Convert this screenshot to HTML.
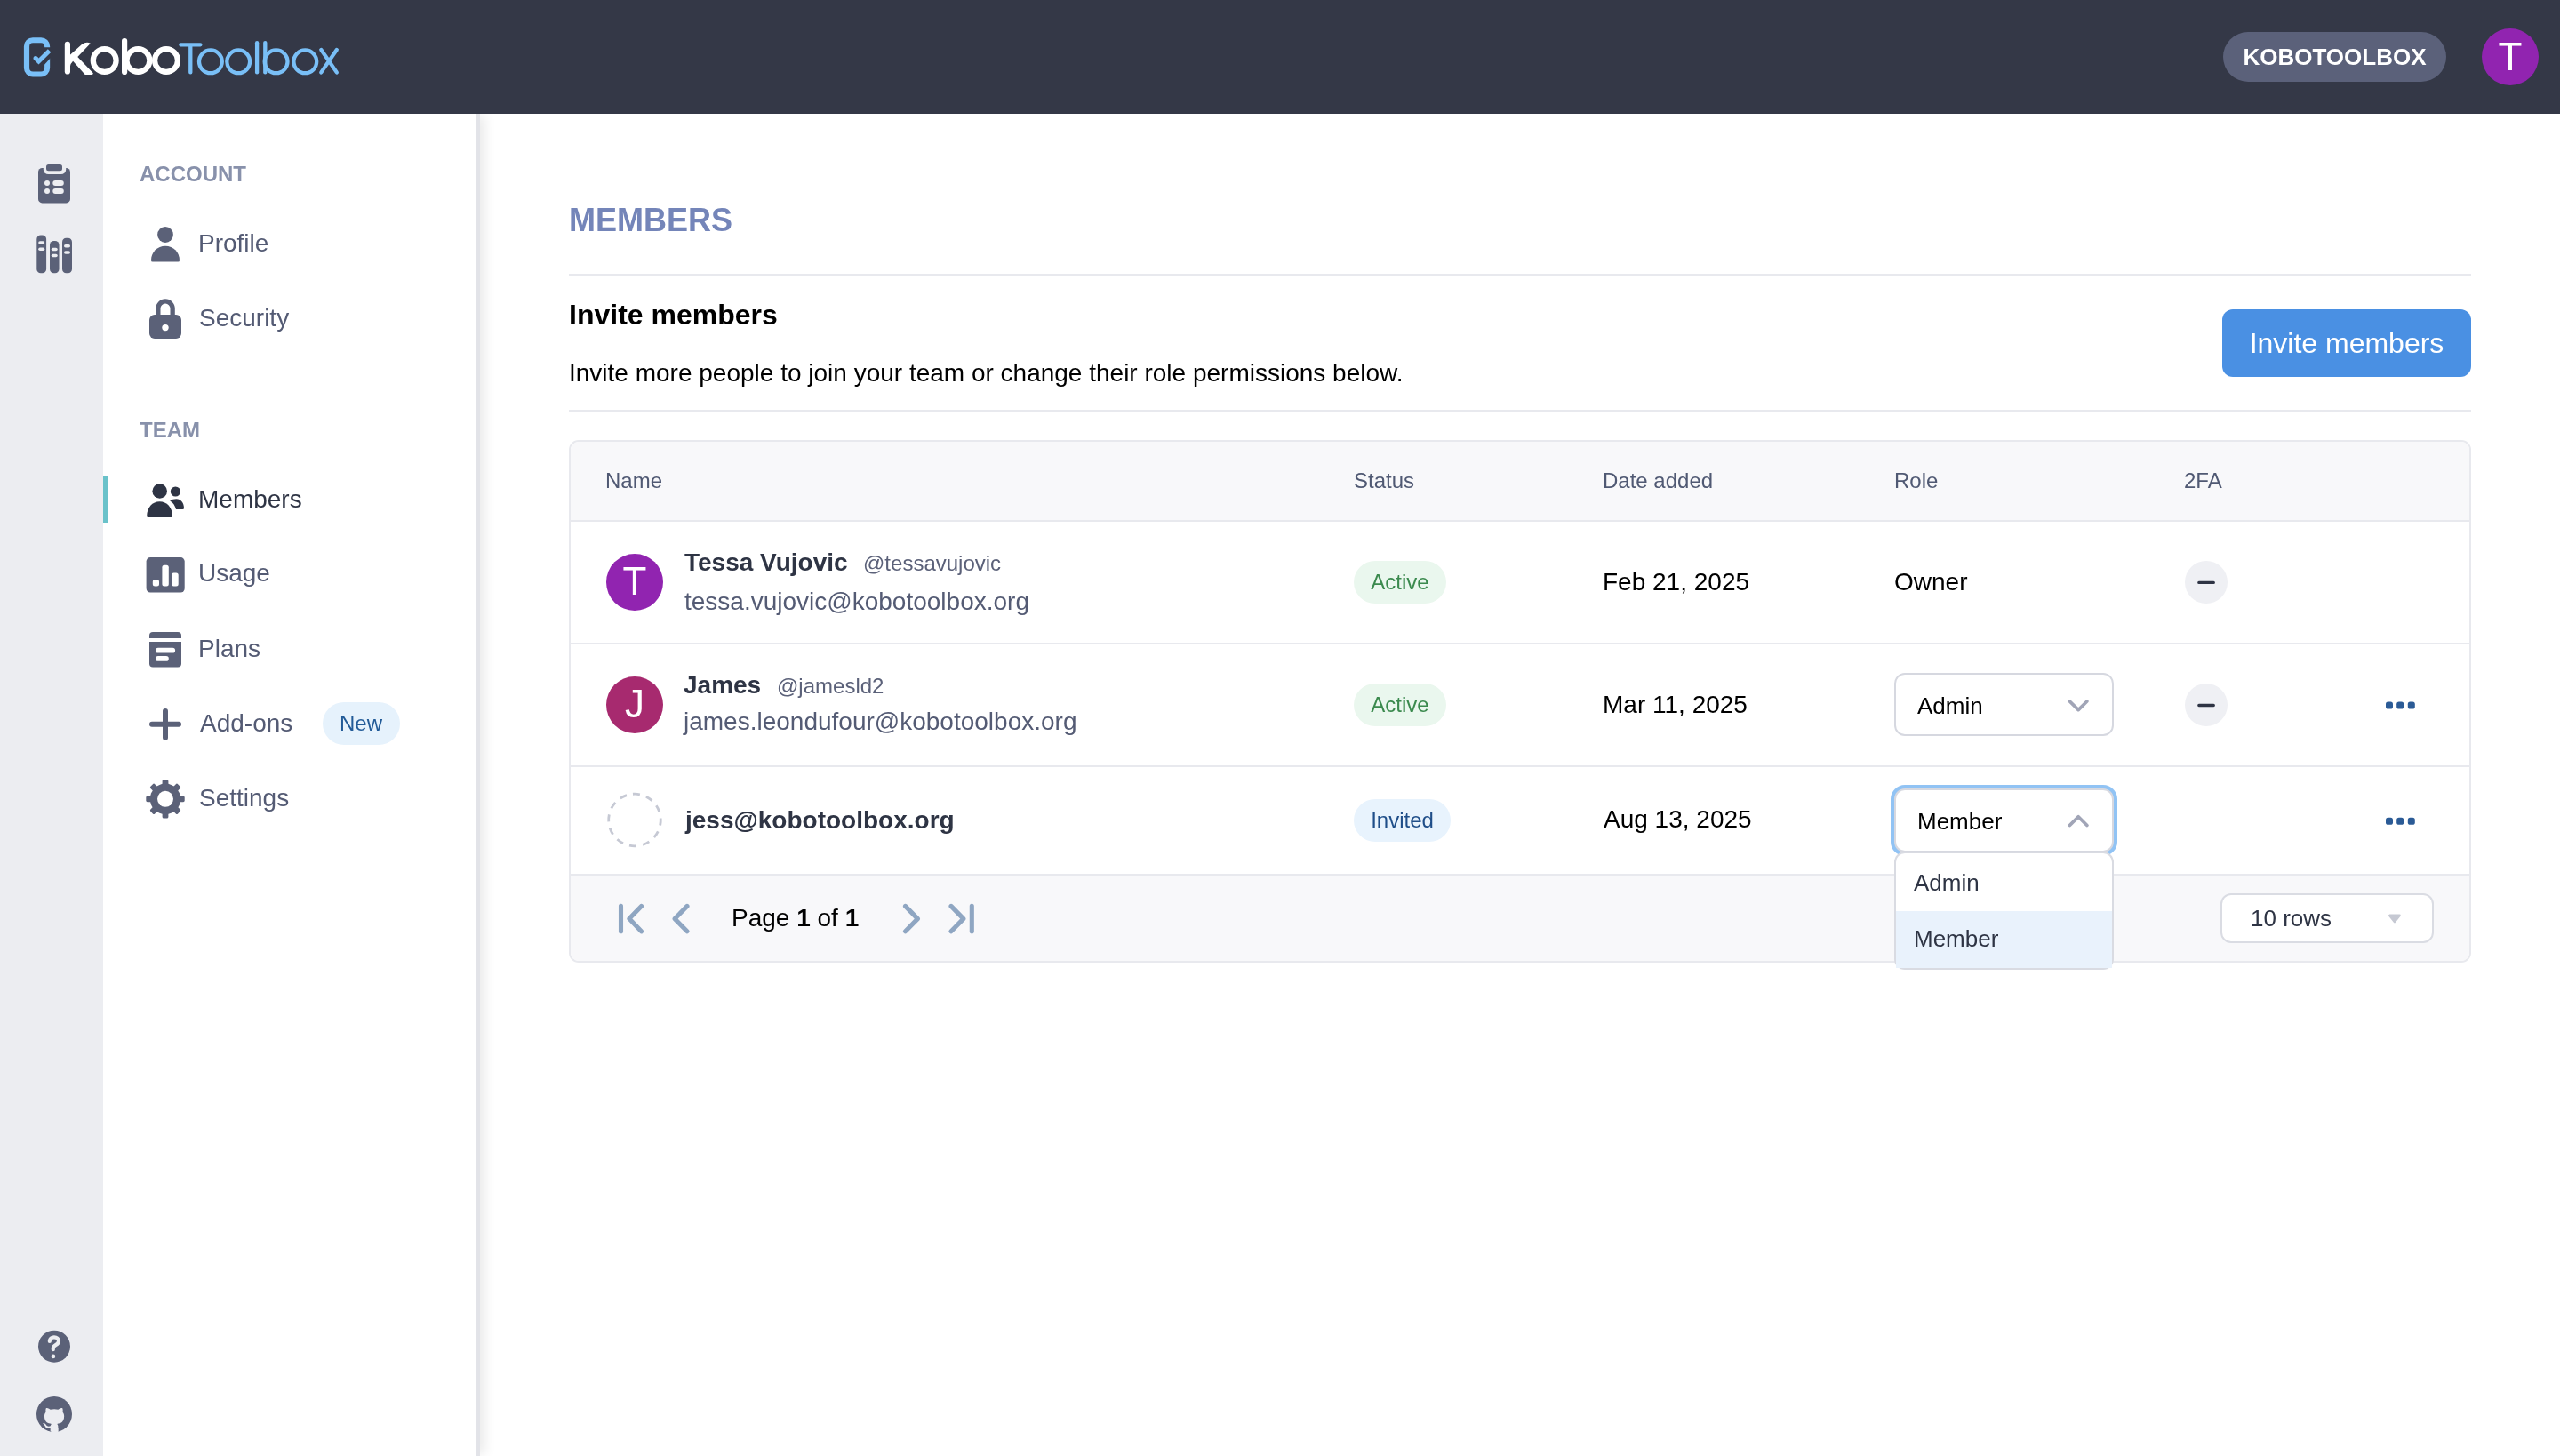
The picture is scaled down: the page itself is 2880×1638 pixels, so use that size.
<!DOCTYPE html>
<html><head><meta charset="utf-8">
<style>
html,body{margin:0;padding:0;width:2880px;height:1638px;overflow:hidden;background:#fff;}
body{position:relative;font-family:"Liberation Sans",sans-serif;}
.a{position:absolute;}
.t{position:absolute;white-space:nowrap;line-height:1;will-change:transform;}
#hdr{left:0;top:0;width:2880px;height:128px;background:#343847;}
#isb{left:0;top:128px;width:116px;height:1510px;background:#ecedf1;}
#nsb{left:116px;top:128px;width:420px;height:1510px;background:#fff;border-right:4px solid #e2e3e8;box-shadow:8px 0 12px -2px rgba(0,0,0,0.08);}
.lbl{font-size:24px;font-weight:700;color:#8891ab;}
.nav{font-size:28px;color:#545b74;}
</style></head><body>
<div id="isb" class="a"></div>
<div id="nsb" class="a"></div>
<div id="hdr" class="a"></div>

<!-- header items -->
<div class="a" style="left:2501px;top:36px;width:251px;height:56px;border-radius:28px;background:#5b617a;"></div>
<div class="t" style="left:2501px;top:51px;width:251px;text-align:center;font-size:26px;font-weight:700;color:#fff;">KOBOTOOLBOX</div>
<div class="a" style="left:2792px;top:32px;width:64px;height:64px;border-radius:50%;background:#9124b0;"></div>
<div class="t" style="left:2792px;top:42px;width:64px;text-align:center;font-size:44px;color:#fff;">T</div>

<!-- sidebar text -->
<div class="t lbl" style="left:157px;top:184px;">ACCOUNT</div>
<div class="t nav" style="left:223px;top:260px;">Profile</div>
<div class="t nav" style="left:224px;top:344px;">Security</div>
<div class="t lbl" style="left:157px;top:472px;">TEAM</div>
<div class="a" style="left:116px;top:536px;width:6px;height:52px;background:#6ac2ca;"></div>
<div class="t nav" style="left:223px;top:548px;color:#2e3444;">Members</div>
<div class="t nav" style="left:223px;top:631px;">Usage</div>
<div class="t nav" style="left:223px;top:716px;">Plans</div>
<div class="t nav" style="left:224.5px;top:800px;">Add-ons</div>
<div class="a" style="left:363px;top:790px;width:87px;height:48px;border-radius:24px;background:#e6f2fc;"></div>
<div class="t" style="left:363px;top:802px;width:86px;text-align:center;font-size:24px;color:#225b98;">New</div>
<div class="t nav" style="left:224px;top:884px;">Settings</div>

<!-- main -->
<div class="t" style="left:640px;top:230px;font-size:36px;font-weight:700;color:#7485b9;">MEMBERS</div>
<div class="a" style="left:640px;top:308px;width:2140px;height:2px;background:#e8e9ee;"></div>
<div class="t" style="left:640px;top:338px;font-size:32px;font-weight:700;color:#000;">Invite members</div>
<div class="t" style="left:640px;top:406px;font-size:28px;color:#000;">Invite more people to join your team or change their role permissions below.</div>
<div class="a" style="left:2500px;top:348px;width:280px;height:76px;border-radius:12px;background:#4a90e3;"></div>
<div class="t" style="left:2500px;top:370px;width:280px;text-align:center;font-size:32px;color:#fff;">Invite members</div>
<div class="a" style="left:640px;top:461px;width:2140px;height:2px;background:#e8e9ee;"></div>

<!-- table -->
<div class="a" style="left:640px;top:495px;width:2136px;height:584px;border:2px solid #e8e9ee;border-radius:11px;background:#fff;overflow:hidden;">
  <div class="a" style="left:0;top:0;width:2136px;height:88px;background:#f8f8fa;"></div>
  <div class="a" style="left:0;top:88px;width:2136px;height:2px;background:#e8e9ee;"></div>
  <div class="a" style="left:0;top:226px;width:2136px;height:2px;background:#e8e9ee;"></div>
  <div class="a" style="left:0;top:364px;width:2136px;height:2px;background:#e8e9ee;"></div>
  <div class="a" style="left:0;top:486px;width:2136px;height:2px;background:#e8e9ee;"></div>
  <div class="a" style="left:0;top:488px;width:2136px;height:96px;background:#f8f8fa;"></div>
</div>
<div class="t" style="left:681px;top:529px;font-size:24px;color:#505973;">Name</div>
<div class="t" style="left:1523px;top:529px;font-size:24px;color:#505973;">Status</div>
<div class="t" style="left:1803px;top:529px;font-size:24px;color:#505973;">Date added</div>
<div class="t" style="left:2131px;top:529px;font-size:24px;color:#505973;">Role</div>
<div class="t" style="left:2457px;top:529px;font-size:24px;color:#505973;">2FA</div>

<!-- row 1 -->
<div class="a" style="left:682px;top:623px;width:64px;height:64px;border-radius:50%;background:#9124b0;"></div>
<div class="t" style="left:682px;top:632px;width:64px;text-align:center;font-size:44px;color:#fff;">T</div>
<div class="t" style="left:770px;top:619px;font-size:28px;font-weight:700;color:#2e3444;">Tessa Vujovic</div>
<div class="t" style="left:971px;top:622px;font-size:24px;color:#5b6179;">@tessavujovic</div>
<div class="t" style="left:770px;top:663px;font-size:28px;color:#545b74;">tessa.vujovic@kobotoolbox.org</div>
<div class="a" style="left:1523px;top:631px;width:104px;height:48px;border-radius:24px;background:#eaf7ee;"></div>
<div class="t" style="left:1523px;top:643px;width:104px;text-align:center;font-size:24px;color:#3b8a4e;">Active</div>
<div class="t" style="left:1803px;top:641px;font-size:28px;color:#000;">Feb 21, 2025</div>
<div class="t" style="left:2131px;top:641px;font-size:28px;color:#000;">Owner</div>
<div class="a" style="left:2458px;top:631px;width:48px;height:48px;border-radius:50%;background:#eff0f4;"></div>

<!-- row 2 -->
<div class="a" style="left:682px;top:761px;width:64px;height:64px;border-radius:50%;background:#a72a6f;"></div>
<div class="t" style="left:682px;top:770px;width:64px;text-align:center;font-size:44px;color:#fff;">J</div>
<div class="t" style="left:769px;top:757px;font-size:28px;font-weight:700;color:#2e3444;">James</div>
<div class="t" style="left:874px;top:760px;font-size:24px;color:#5b6179;">@jamesld2</div>
<div class="t" style="left:769px;top:798px;font-size:28px;color:#545b74;">james.leondufour@kobotoolbox.org</div>
<div class="a" style="left:1523px;top:769px;width:104px;height:48px;border-radius:24px;background:#eaf7ee;"></div>
<div class="t" style="left:1523px;top:781px;width:104px;text-align:center;font-size:24px;color:#3b8a4e;">Active</div>
<div class="t" style="left:1803px;top:779px;font-size:28px;color:#000;">Mar 11, 2025</div>
<div class="a" style="left:2131px;top:757px;width:243px;height:67px;border:2px solid #d6d8e0;border-radius:12px;background:#fff;"></div>
<div class="t" style="left:2157px;top:781px;font-size:26px;color:#000;">Admin</div>
<div class="a" style="left:2458px;top:769px;width:48px;height:48px;border-radius:50%;background:#eff0f4;"></div>

<!-- row 3 -->
<div class="t" style="left:771px;top:909px;font-size:28px;font-weight:700;color:#2e3444;">jess@kobotoolbox.org</div>
<div class="a" style="left:1523px;top:899px;width:109px;height:48px;border-radius:24px;background:#e8f3fd;"></div>
<div class="t" style="left:1523px;top:911px;width:109px;text-align:center;font-size:24px;color:#1f4e89;">Invited</div>
<div class="t" style="left:1804px;top:908px;font-size:28px;color:#000;">Aug 13, 2025</div>
<div class="a" style="left:2127px;top:883px;width:255px;height:80px;border-radius:16px;background:#91c3f4;"></div>
<div class="a" style="left:2131px;top:887px;width:243px;height:68px;border:2px solid #d6d8e0;border-radius:12px;background:#fff;"></div>
<div class="t" style="left:2157px;top:911px;font-size:26px;color:#000;">Member</div>

<!-- footer -->
<div class="t" style="left:823px;top:1019px;font-size:28px;color:#000;">Page <b>1</b> of <b>1</b></div>
<div class="a" style="left:2498px;top:1005px;width:236px;height:52px;border:2px solid #dadce3;border-radius:12px;background:#fff;"></div>
<div class="t" style="left:2532px;top:1020px;font-size:26px;color:#2e3444;">10 rows</div>

<!-- dropdown -->
<div class="a" style="left:2131px;top:958px;width:243px;height:129px;border:2px solid #d9dbe2;border-radius:12px;background:#fff;">
  <div class="a" style="left:0;top:65px;width:243px;height:64px;background:#e9f2fc;"></div>
</div>
<div class="t" style="left:2153px;top:980px;font-size:26px;color:#2e3444;">Admin</div>
<div class="t" style="left:2153px;top:1043px;font-size:26px;color:#2e3444;">Member</div>

<!-- icon overlay -->
<svg class="a" style="left:0;top:0;" width="2880" height="1638" viewBox="0 0 2880 1638">
<!-- logo -->
<g fill="none" stroke-linecap="round" stroke-linejoin="round">
 <path fill="#79bff7" stroke="none" fill-rule="evenodd" d="M36.9,42.15 H46.15 A10,10 0 0 1 56.15,52.15 V76.4 A10,10 0 0 1 46.15,86.4 H36.9 A10,10 0 0 1 26.9,76.4 V52.15 A10,10 0 0 1 36.9,42.15 Z M37.1,48.3 H46.1 A4,4 0 0 1 50.1,52.3 V76.6 A4,4 0 0 1 46.1,80.6 H37.1 A4,4 0 0 1 33.1,76.6 V52.3 A4,4 0 0 1 37.1,48.3 Z"/>
 <path fill="#343847" stroke="none" d="M47,53.3 H60 V61.7 L47,76.1 Z"/>
 <path d="M40,65.5 L43.5,69 L55.6,56.9" stroke="#79bff7" stroke-width="5" stroke-linecap="butt" stroke-linejoin="miter"/>
 <circle cx="40" cy="65.5" r="2.5" fill="#79bff7" stroke="none"/>
 <g stroke="#fff" stroke-width="6.2">
  <path d="M75.9,49.9 V80.4"/>
  <path d="M78.8,61.7 L92,49.9 Q97.5,46 101.8,48.8 L87.3,64 L104.8,82.2 Q104.8,83.9 103.2,83.9 L95.7,83.9 L82.1,68.8 Q79,71.8 78.8,75 Z" fill="#fff" stroke="none"/>
  <circle cx="117.7" cy="68" r="12.95"/>
  <path d="M140.1,46 V80.9"/>
  <circle cx="155.4" cy="68" r="12.95"/>
  <circle cx="187" cy="68" r="12.95"/>
 </g>
 <g stroke="#79bff7" stroke-width="4.3">
  <path d="M203.3,50.3 H225.4 M214.3,50.3 V81.4"/>
  <circle cx="236.9" cy="69.3" r="12.9"/>
  <circle cx="268.2" cy="69.3" r="12.9"/>
  <path d="M289.1,48.2 V81.4"/>
  <path d="M298.3,48.1 V81.4"/>
  <circle cx="310.6" cy="69.3" r="12.9"/>
  <circle cx="343.3" cy="69.3" r="12.9"/>
  <path d="M361.3,56 L378.8,81.4 M378.8,56 L361.3,81.4"/>
 </g>
</g>
<!-- icon sidebar -->
<g fill="#5b6178">
 <rect x="43" y="189" width="36" height="39.4" rx="4.5"/>
 <rect x="48.8" y="178" width="25.4" height="18" rx="5.5" fill="#ecedf1"/>
 <rect x="52" y="185" width="18" height="7.3" rx="2.5"/>
 <g fill="#ecedf1">
  <circle cx="53" cy="206" r="3"/><circle cx="53" cy="215" r="3"/>
  <rect x="59.3" y="203" width="12.5" height="6" rx="3"/><rect x="59.3" y="212" width="12.5" height="6" rx="3"/>
 </g>
 <rect x="41.3" y="264.4" width="10.8" height="42.8" rx="4.5"/>
 <rect x="56" y="271" width="10.5" height="36.2" rx="4.5"/>
 <rect x="70" y="267.8" width="11" height="39.4" rx="4.5"/>
 <g fill="#ecedf1">
  <rect x="43.2" y="271.2" width="7" height="3.6" rx="1.8"/><rect x="43.2" y="278.5" width="7" height="3.6" rx="1.8"/>
  <rect x="57.75" y="278.7" width="7" height="3.6" rx="1.8"/><rect x="57.75" y="285.7" width="7" height="3.6" rx="1.8"/>
  <rect x="72" y="274.9" width="7" height="3.6" rx="1.8"/><rect x="72" y="282.2" width="7" height="3.6" rx="1.8"/>
 </g>
 <circle cx="61" cy="1514.7" r="18"/>
 <mask id="gm" maskUnits="userSpaceOnUse" x="30" y="1560" width="62" height="62"><rect x="30" y="1560" width="62" height="62" fill="#fff"/><g transform="translate(61,1594.2) scale(0.87) translate(-61,-1591)"><circle cx="61" cy="1591" r="19" fill="#000"/><path transform="translate(41,1571) scale(2.5)" fill="#fff" d="M8 0C3.58 0 0 3.58 0 8c0 3.54 2.29 6.53 5.47 7.59.4.07.55-.17.55-.38 0-.19-.01-.82-.01-1.49-2.01.37-2.53-.49-2.69-.94-.09-.23-.48-.94-.82-1.13-.28-.15-.68-.52-.01-.53.63-.01 1.08.58 1.23.82.72 1.21 1.87.87 2.33.66.07-.52.28-.87.51-1.07-1.78-.2-3.64-.89-3.64-3.95 0-.87.31-1.59.82-2.150-.08-.2-.36-1.02.08-2.12 0 0 .67-.21 2.2.82.64-.18 1.32-.27 2-.27.68 0 1.36.09 2 .27 1.53-1.04 2.2-.82 2.2-.82.44 1.1.16 1.92.08 2.12.51.56.82 1.27.82 2.15 0 3.07-1.87 3.75-3.65 3.95.29.25.54.73.54 1.48 0 1.07-.01 1.930-.01 2.2 0 .21.15.46.55.38A8.013 8.013 0 0016 8c0-4.42-3.58-8-8-8z"/></g><rect x="57.5" y="1606" width="8" height="8" fill="#000"/></mask>
 <circle cx="61" cy="1591" r="20" mask="url(#gm)"/>
</g>
<path d="M55.8,1508.9 C55.8,1506 58,1504.4 60.9,1504.4 C63.9,1504.4 66,1506.3 66,1508.7 C66,1511.1 64.4,1512.1 62.6,1513.1 C60.8,1514.1 59.8,1514.9 59.8,1516.9 V1518.2" fill="none" stroke="#ecedf1" stroke-width="4.2" stroke-linecap="round"/>
<circle cx="59.9" cy="1525.9" r="2.3" fill="#ecedf1"/>
<!-- nav icons -->
<g fill="#5b6178">
 <circle cx="186" cy="264" r="8.9"/>
 <path d="M170,293 C170,283.5 177,276.7 186,276.7 C195,276.7 202,283.5 202,293 Q202,294.5 200.5,294.5 H171.5 Q170,294.5 170,293 Z"/>
 <path d="M177.85,354.5 V347.1 A8.15,8.15 0 0 1 194.15,347.1 V354.5" fill="none" stroke="#5b6178" stroke-width="5.3"/>
 <rect x="168" y="354.1" width="36" height="26.9" rx="6"/>
 <circle cx="186" cy="368.6" r="3.7" fill="#fff"/>
 <rect x="164.6" y="627.1" width="43.1" height="39.4" rx="4.5"/>
 <g fill="#fff"><rect x="171.8" y="652.1" width="7.2" height="7.4" rx="2.5"/><rect x="182.4" y="635.8" width="7.4" height="23.7" rx="2.5"/><rect x="193" y="644.6" width="7.7" height="14.9" rx="2.5"/></g>
 <path d="M168,718.1 V715 A4,4 0 0 1 172,711 H200 A4,4 0 0 1 204,715 V718.1 Z"/>
 <path d="M168,721.9 H204 V746.5 A4,4 0 0 1 200,750.5 H172 A4,4 0 0 1 168,746.5 Z"/>
 <g fill="#fff"><rect x="175" y="728.8" width="22.1" height="5.8" rx="2.9"/><rect x="175" y="738" width="14.8" height="5.75" rx="2.9"/></g>
 <path d="M186,799.9 V829.7 M171,814.8 H201" fill="none" stroke="#5b6178" stroke-width="6" stroke-linecap="round"/>
 <g transform="translate(186,898.8)">
  <circle r="17.2"/>
  <rect x="-3.4" y="-21.7" width="6.8" height="43.4" rx="1.6"/>
  <rect x="-3.4" y="-21.7" width="6.8" height="43.4" rx="1.6" transform="rotate(45)"/>
  <rect x="-3.4" y="-21.7" width="6.8" height="43.4" rx="1.6" transform="rotate(90)"/>
  <rect x="-3.4" y="-21.7" width="6.8" height="43.4" rx="1.6" transform="rotate(135)"/>
  <circle r="9" fill="#fff"/>
 </g>
</g>
<g fill="#2e3444">
 <circle cx="179.7" cy="552.5" r="8.3"/>
 <path d="M165.2,580.5 C165.2,571 171.5,564.3 179.6,564.3 C187.7,564.3 194,571 194,580.5 Q194,582 192.5,582 H166.7 Q165.2,582 165.2,580.5 Z"/>
 <circle cx="197.4" cy="553" r="5.6"/>
 <path d="M191.2,563.6 C193.2,562 195.6,561.2 198.4,561.2 C203.4,561.2 207,565.8 207,571.5 Q207,573 205.5,573 H198 C197,569.2 195,565.8 191.2,563.6 Z"/>
</g>
<!-- table icons -->
<circle cx="714" cy="922.5" r="29.3" fill="none" stroke="#c6c9d4" stroke-width="2.8" stroke-dasharray="8 7.34" transform="rotate(-94 714 922.5)"/>
<path d="M2473.8,655.4 H2490.3 M2473.8,793.5 H2490.3" stroke="#2e3444" stroke-width="3.3" stroke-linecap="round"/>
<path d="M2328.4,789 L2338.15,798.6 L2347.9,789 M2328.4,928.5 L2338.15,918.8 L2347.9,928.5" fill="none" stroke="#a1a5b7" stroke-width="3.8" stroke-linecap="round" stroke-linejoin="round"/>
<g fill="#2b5b96">
 <rect x="2684" y="789.6" width="8" height="8" rx="2.6"/><rect x="2696.2" y="789.6" width="8" height="8" rx="2.6"/><rect x="2708.8" y="789.6" width="8" height="8" rx="2.6"/>
 <rect x="2684" y="919.8" width="8" height="8" rx="2.6"/><rect x="2696.2" y="919.8" width="8" height="8" rx="2.6"/><rect x="2708.8" y="919.8" width="8" height="8" rx="2.6"/>
</g>
<g fill="none" stroke="#8fa6c2" stroke-width="5.1" stroke-linecap="round" stroke-linejoin="round">
 <path d="M698.5,1019.4 V1047.8 M721.5,1019.4 L707.9,1033.6 L721.5,1047.8"/>
 <path d="M773,1019.4 L759.1,1033.6 L773,1047.8"/>
 <path d="M1018.5,1019.4 L1032.4,1033.6 L1018.5,1047.8"/>
 <path d="M1070,1019.4 L1083.9,1033.6 L1070,1047.8 M1093.3,1019.4 V1047.8"/>
</g>
<path d="M2688.3,1029.9 H2699.5 L2693.9,1037 Z" fill="#c6c9d3" stroke="#c6c9d3" stroke-width="2.6" stroke-linejoin="round"/>
</svg>
</body></html>
